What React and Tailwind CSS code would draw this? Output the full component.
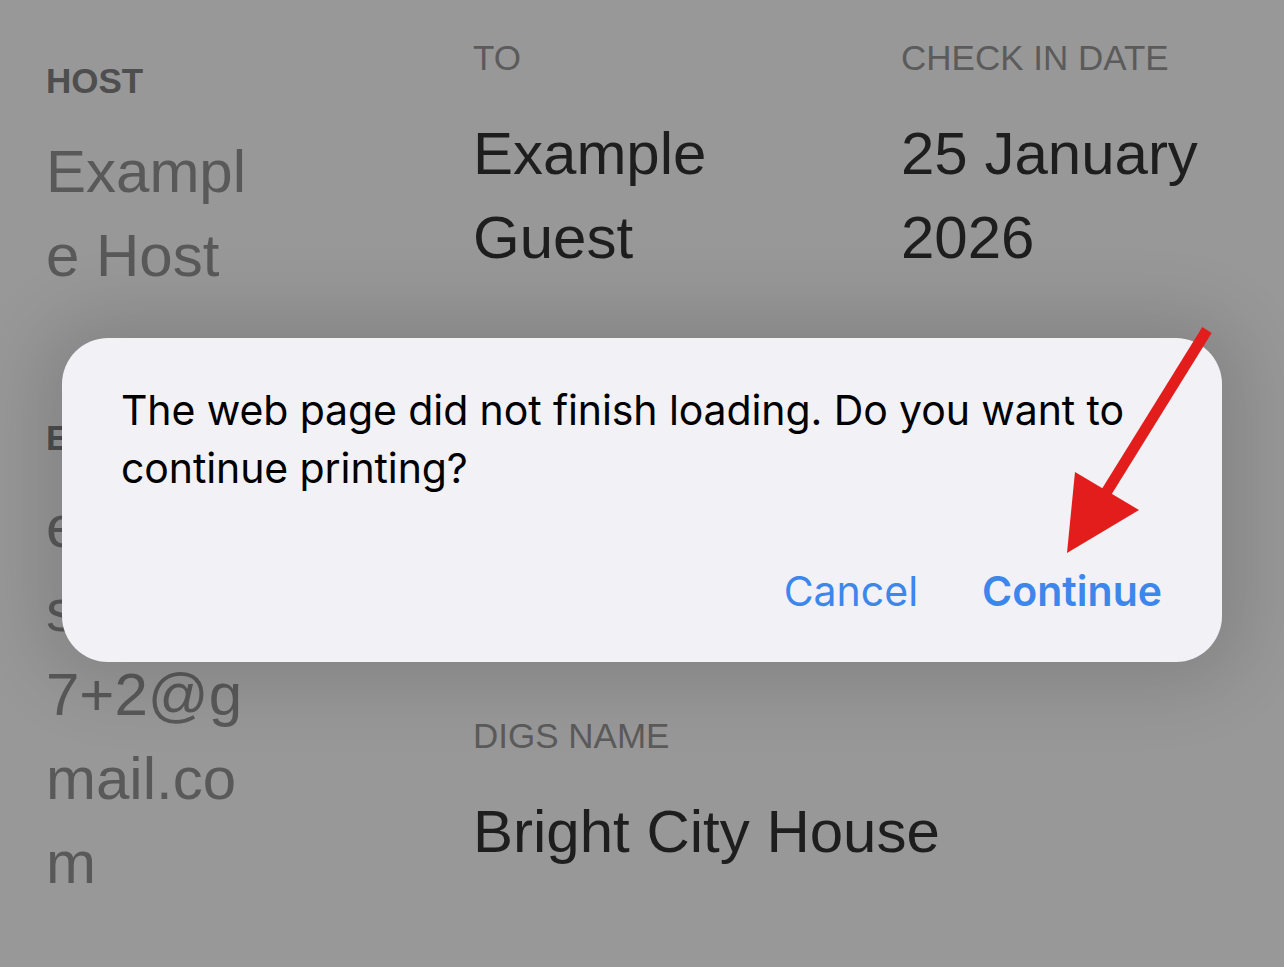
import React from "react";

const Label = ({ children, bold }) => (
  <div
    className={`text-[35px] leading-[35px] ${
      bold ? "font-bold text-[#4e4e4e]" : "text-[#5b5b5b]"
    }`}
  >
    {children}
  </div>
);

const Value = ({ children }) => (
  <div className="mt-[37px] text-[60px] leading-[84px] text-[#1e1e1e]">
    {children}
  </div>
);

const App = () => {
  return (
    <div
      className="relative w-[1284px] h-[967px] overflow-hidden bg-[#989898]"
      style={{ fontFamily: '"Liberation Sans", Arial, sans-serif' }}
    >
      {/* Page behind the alert */}
      <div className="flex items-start pl-[46px]">
        {/* Left column */}
        <div className="w-[427px] pt-[63px] flex flex-col">
          <Label bold>HOST</Label>
          <div className="mt-[32px] w-[210px] break-all text-[60px] leading-[84px] text-[#595959]">
            Example Host
          </div>

          <div className="mt-[122px]">
            <Label bold>EMAIL</Label>
          </div>
          <div className="mt-[30px] text-[60px] leading-[84px] text-[#595959]">
            <div>exampl</div>
            <div>sguest</div>
            <div>7+2@g</div>
            <div>mail.co</div>
            <div>m</div>
          </div>
        </div>

        {/* Right grid */}
        <div className="flex-1 pt-[40px] grid grid-cols-[428px_1fr] gap-y-[99px]">
          <div>
            <Label>TO</Label>
            <Value>
              Example
              <br />
              Guest
            </Value>
          </div>
          <div>
            <Label>CHECK IN DATE</Label>
            <Value>
              25 January
              <br />
              2026
            </Value>
          </div>

          {/* row hidden behind the alert */}
          <div className="col-span-2 h-[240px]" />

          <div className="col-span-2">
            <Label>DIGS NAME</Label>
            <Value>Bright City House</Value>
          </div>
        </div>
      </div>

      {/* Alert */}
      <div
        className="absolute left-[62px] top-[338px] w-[1160px] h-[324px] rounded-[46px] bg-[#f1f1f6] shadow-[0_0_70px_25px_rgba(0,0,0,0.13)] pl-[59px] pr-[60px] pt-[43px] flex flex-col"
        style={{ fontFamily: "Inter, 'Noto Sans', sans-serif" }}
      >
        <p className="text-[41px] leading-[58px] text-black tracking-[-0.1px]">
          The web page did not finish loading. Do you want to continue printing?
        </p>
        <div className="mt-auto mb-[42px] flex justify-end gap-[64px] text-[41px] leading-[58px] text-[#3d86eb]">
          <span>Cancel</span>
          <span className="font-semibold">Continue</span>
        </div>
      </div>

      {/* Annotation arrow */}
      <svg
        className="absolute inset-0 pointer-events-none"
        width="1284"
        height="967"
        viewBox="0 0 1284 967"
      >
        <line
          x1="1207"
          y1="330"
          x2="1104"
          y2="496"
          stroke="#e31c1c"
          strokeWidth="11"
        />
        <polygon points="1067,553 1075,472 1139,510" fill="#e31c1c" />
      </svg>
    </div>
  );
};

export default App;
